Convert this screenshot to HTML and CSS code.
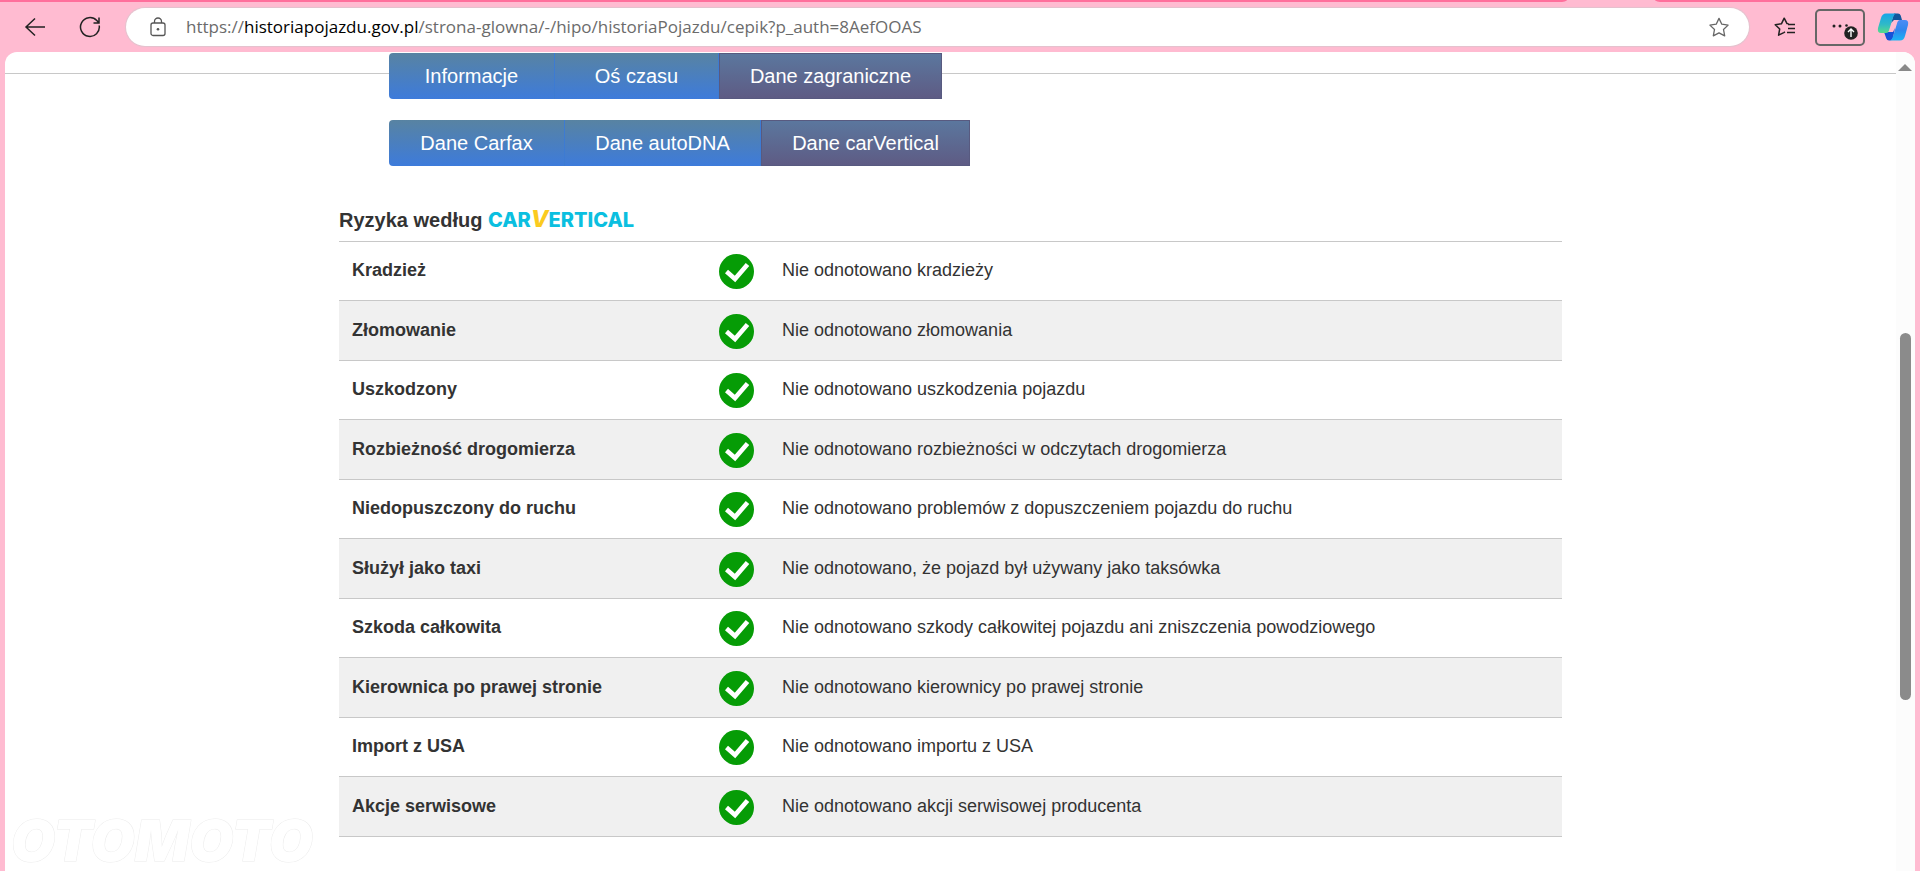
FILE: index.html
```html
<!DOCTYPE html>
<html lang="pl">
<head>
<meta charset="utf-8">
<title>Historia pojazdu</title>
<link rel="stylesheet" href="styles.css">
</head>
<body>
<svg class="defs" width="0" height="0" aria-hidden="true">
  <symbol id="ok" viewBox="0 0 35 35">
    <circle cx="17.5" cy="17.5" r="17.5" fill="#069c06"/>
    <path d="M7.5 17.5L16 25L28.500 10.500" fill="none" stroke="#fff" stroke-width="4.6"/>
  </symbol>
</svg>
<div class="browser">
  <div class="tab-strip"><span class="strip strip-left"></span><span class="strip strip-right"></span></div>
  <header class="toolbar">
    <button class="icon-btn back" aria-label="Wstecz">
      <svg width="22" height="20" viewBox="0 0 22 20"><path d="M11 1.5L2 10L11 18.5M2 10H21" fill="none" stroke="#222" stroke-width="1.5"/></svg>
    </button>
    <button class="icon-btn reload" aria-label="Odśwież">
      <svg width="22" height="22" viewBox="0 0 22 22"><path d="M20.2 9.5A9.4 9.4 0 1 1 17.8 4.6L20 7M20 1.5V7H14.5" fill="none" stroke="#222" stroke-width="1.5"/></svg>
    </button>
    <div class="address">
      <svg width="16" height="20" viewBox="0 0 16 20"><rect x="1" y="6" width="14" height="12.5" rx="2" fill="none" stroke="#555" stroke-width="1.3"/><path d="M4.5 6V4.5a3.5 3.5 0 0 1 7 0V6" fill="none" stroke="#555" stroke-width="1.3"/><circle cx="8" cy="12.3" r="1.3" fill="#555"/></svg>
      <div class="url" role="textbox" contenteditable="true" spellcheck="false" aria-label="Adres">https://<b>historiapojazdu.gov.pl</b>/strona-glowna/-/hipo/historiaPojazdu/cepik?p_auth=8AefOOAS</div>
      <button class="icon-btn" aria-label="Dodaj do ulubionych">
        <svg width="22" height="20" viewBox="0 0 22 20"><path d="M11 1.4l2.8 5.8 6.3.9-4.6 4.4 1.2 6.3-5.7-3-5.7 3 1.2-6.3L1.9 8.1l6.3-.9z" fill="none" stroke="#666" stroke-width="1.3" stroke-linejoin="round"/></svg>
      </button>
    </div>
    <button class="icon-btn favs" aria-label="Ulubione">
      <svg width="22" height="20" viewBox="0 0 22 20"><path d="M14 7.500H21M14 11.500H21M13 15.500H21" stroke="#222" stroke-width="1.5"/><path d="M14.6 6.8L13 6.600 10.2 1.2 7.4 6.8 1.2 7.7l4.5 4.3-1.1 6.2 5.2-2.600 1.2-.7" fill="none" stroke="#222" stroke-width="1.5" stroke-linejoin="round"/></svg>
    </button>
    <button class="icon-btn menu" aria-label="Ustawienia i więcej">
      <svg width="28" height="20" viewBox="0 0 28 20"><circle cx="3" cy="5" r="1.5" fill="#222"/><circle cx="9" cy="5" r="1.5" fill="#222"/><circle cx="15.5" cy="4.5" r="1.3" fill="#222"/><circle cx="20" cy="12" r="6.8" fill="#222"/><path d="M20 16V8.5M17 11l3-3 3 3" fill="none" stroke="#fff" stroke-width="1.4"/></svg>
    </button>
    <button class="icon-btn copilot" aria-label="Copilot">
      <svg width="32" height="28" viewBox="0 0 32 28">
        <defs>
          <linearGradient id="ga" x1="0" y1="0" x2="0" y2="1"><stop offset="0" stop-color="#18a5e8"/><stop offset=".55" stop-color="#2fb9c8"/><stop offset="1" stop-color="#56dc8a"/></linearGradient>
          <linearGradient id="gb" x1="0" y1="0" x2="0" y2="1"><stop offset="0" stop-color="#4d8cf5"/><stop offset=".5" stop-color="#2f86ee"/><stop offset="1" stop-color="#1bb4f4"/></linearGradient>
        </defs>
        <path d="M17 .5h4q2 0 2.7 2L25 7h-8l-3 3z" fill="#12579c"/>
        <path d="M7 19h9l2-4-2 10q-1 2.500-3 2.500h-1q-2 0-2.700-2z" fill="#1652d8"/>
        <path d="M9 .5h10q-2 .500-3 4l-4 13q-.6 2.500-3 2.500H4Q0 20 1 15L4 5Q5.200.500 9 .5z" fill="url(#ga)"/>
        <path d="M23 7h5q4 0 3 5l-3 11q-1.200 4.500-5 4.500H13q2-.500 3-4l4-13q.7-3.500 3-3.500z" fill="url(#gb)"/>
      </svg>
    </button>
  </header>
  <div class="viewport">
    <main class="page">
      <div class="tabs-line">
        <nav class="content tabs"><button class="t1">Informacje</button><button class="t2">Oś czasu</button><button class="t3 active">Dane zagraniczne</button></nav>
      </div>
      <nav class="content tabs second"><button class="t4">Dane Carfax</button><button class="t5">Dane autoDNA</button><button class="t6 active">Dane carVertical</button></nav>
      <section class="content">
        <h2>Ryzyka według <span class="brand">CAR<span class="tick">V</span>ERTICAL</span></h2>
        <table>
          <tr><th scope="row">Kradzież</th><td class="status"><svg><use href="#ok"/></svg></td><td>Nie odnotowano kradzieży</td></tr>
          <tr><th scope="row">Złomowanie</th><td class="status"><svg><use href="#ok"/></svg></td><td>Nie odnotowano złomowania</td></tr>
          <tr><th scope="row">Uszkodzony</th><td class="status"><svg><use href="#ok"/></svg></td><td>Nie odnotowano uszkodzenia pojazdu</td></tr>
          <tr><th scope="row">Rozbieżność drogomierza</th><td class="status"><svg><use href="#ok"/></svg></td><td>Nie odnotowano rozbieżności w odczytach drogomierza</td></tr>
          <tr><th scope="row">Niedopuszczony do ruchu</th><td class="status"><svg><use href="#ok"/></svg></td><td>Nie odnotowano problemów z dopuszczeniem pojazdu do ruchu</td></tr>
          <tr><th scope="row">Służył jako taxi</th><td class="status"><svg><use href="#ok"/></svg></td><td>Nie odnotowano, że pojazd był używany jako taksówka</td></tr>
          <tr><th scope="row">Szkoda całkowita</th><td class="status"><svg><use href="#ok"/></svg></td><td>Nie odnotowano szkody całkowitej pojazdu ani zniszczenia powodziowego</td></tr>
          <tr><th scope="row">Kierownica po prawej stronie</th><td class="status"><svg><use href="#ok"/></svg></td><td>Nie odnotowano kierownicy po prawej stronie</td></tr>
          <tr><th scope="row">Import z USA</th><td class="status"><svg><use href="#ok"/></svg></td><td>Nie odnotowano importu z USA</td></tr>
          <tr><th scope="row">Akcje serwisowe</th><td class="status"><svg><use href="#ok"/></svg></td><td>Nie odnotowano akcji serwisowej producenta</td></tr>
        </table>
      </section>
    </main>
    <div class="scrollbar"><span class="arrow"></span><span class="thumb"></span></div>
    <div class="watermark">OTOMOTO</div>
  </div>
</div>
</body>
</html>
```
FILE: styles.css
```css
* { box-sizing: border-box; }
body { margin: 0; background: #ffbbd1; font-family: "Liberation Sans", Arial, sans-serif; color: #333; }
button { font: inherit; border: 0; padding: 0; background: none; }
.defs { position: absolute; }
.browser { display: flex; flex-direction: column; min-height: 100vh; }
.tab-strip { display: flex; height: 2px; gap: 88px; }
.strip { background: #ff6f9c; }
.strip-left { flex: 1; border-bottom-right-radius: 8px 2px; }
.strip-right { width: 265px; border-bottom-left-radius: 8px 2px; }
.toolbar { display: flex; align-items: center; height: 50px; padding: 0 11px 0 24px; }
.icon-btn { display: flex; align-items: center; justify-content: center; flex: none; }
.back { margin-right: 33px; }
.reload { margin-right: 25px; }
.address { flex: 1; display: flex; align-items: center; height: 38px; padding: 0 19px 0 24px; border-radius: 19px; background: #fff; box-shadow: 0 0 1px 1px #e3c3ce; }
.url { flex: 1; margin-left: 20px; font: 400 17px/24px "Open Sans", "Noto Sans", sans-serif; color: #6b6b6b; outline: 0; white-space: nowrap; }
.url b { font-weight: 400; color: #000; }
.favs { margin-left: 25px; }
.menu { width: 50px; height: 37px; margin: 0 12px 0 19px; padding: 8px 0 0 10px; border: 2px solid #666; border-radius: 5px; }
.viewport { position: relative; flex: 1; display: flex; margin: 0 5px; background: #fff; border-radius: 12px 12px 0 0; overflow: hidden; }
.page { flex: 1; padding: 1px 0 34px; }
.scrollbar { width: 19px; padding: 12px 4px 0 3px; background: #fcfcfc; display: flex; flex-direction: column; align-items: center; }
.arrow { border: 7px solid transparent; border-top: 0; border-bottom-color: #888; }
.thumb { width: 11px; height: 367px; margin-top: 262px; border-radius: 6px; background: #8b8b8b; }
.content { width: 100%; max-width: 1223px; margin: 0 auto; }
.tabs-line { background: linear-gradient(#c8c8c8, #c8c8c8) 0 20px / 100% 1px no-repeat; }
.tabs { display: flex; padding-left: 50px; }
.tabs button { height: 46px; font-size: 20px; line-height: 46px; color: #fff; background: linear-gradient(#5883a2, #3d7bdb); border-right: 1px solid #3d7bd2; }
.tabs button:first-child { border-radius: 4px 0 0 4px; }
.tabs button.active { background: linear-gradient(#5b779e, #5e5b84); border: 1px solid #585a80; line-height: 44px; }
.tabs.second { margin-top: 21px; margin-bottom: 37px; }
.t1 { width: 166px; }
.t2 { width: 164px; }
.t3 { width: 223px; }
.t4 { width: 176px; }
.t5 { width: 196px; }
.t6 { width: 209px; }
h2 { margin: 0; height: 38px; font-size: 20px; line-height: 34px; white-space: nowrap; }
.brand { font-family: Inter, sans-serif; font-weight: 800; color: #0bbfe0; }
.tick { font-size: 23px; line-height: 20px; font-style: italic; color: #fbcb1f; }
table { width: 100%; border-collapse: separate; border-spacing: 0; table-layout: fixed; border-top: 1px solid #c8c8c8; }
tr { height: 59px; }
tr:nth-child(even) { height: 60px; background: #f0f0f0; }
th, td { padding: 0 0 2px 13px; text-align: left; vertical-align: middle; font-size: 18px; line-height: 24px; border-bottom: 1px solid #c8c8c8; }
th { width: 367px; }
td.status { width: 63px; padding-top: 1px; padding-bottom: 0; }
.status svg { display: block; width: 35px; height: 35px; }
.watermark { position: absolute; left: 0; bottom: 0; padding: 0 12px 0 6px; font: italic 900 57px/60px Inter, sans-serif; color: #fff; -webkit-text-stroke: 1px #ececec; paint-order: stroke fill; }
```
